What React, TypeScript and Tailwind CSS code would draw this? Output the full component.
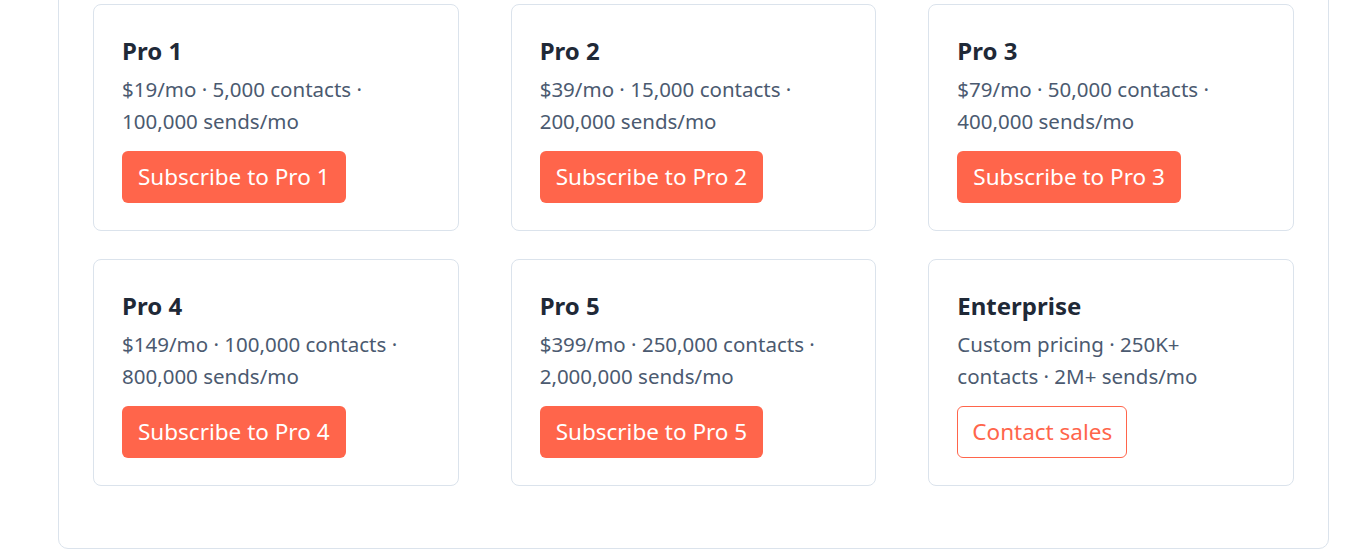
const plans = [
  { name: "Pro 1", desc: "$19/mo · 5,000 contacts · 100,000 sends/mo" },
  { name: "Pro 2", desc: "$39/mo · 15,000 contacts · 200,000 sends/mo" },
  { name: "Pro 3", desc: "$79/mo · 50,000 contacts · 400,000 sends/mo" },
  { name: "Pro 4", desc: "$149/mo · 100,000 contacts · 800,000 sends/mo" },
  { name: "Pro 5", desc: "$399/mo · 250,000 contacts · 2,000,000 sends/mo" },
];

export default function App() {
  return (
    <div className="w-full h-[559px] overflow-hidden bg-white font-['Noto_Sans',sans-serif]">
      <div className="ml-[58px] w-[1271px] -mt-[40px] pt-[43px] pb-[62px] px-[34px] border border-[#dbe3ec] rounded-[10px]">
        <div className="grid grid-cols-3 gap-x-[52px] gap-y-[28px]">
          {plans.map((p) => (
            <div key={p.name} className="border border-[#dbe3ec] rounded-lg pt-[30px] pb-[27px] pl-[28px] pr-[40px]">
              <p className="text-[24px] leading-[32px] font-bold text-[#1f2937]">{p.name}</p>
              <p className="mt-[6px] text-[20.5px] leading-[32px] text-[#4b5a70]">{p.desc}</p>
              <button className="mt-[14px] h-[52px] px-4 rounded-md bg-[#ff654b] text-white text-[22.5px]">
                Subscribe to {p.name}
              </button>
            </div>
          ))}
          <div className="border border-[#dbe3ec] rounded-lg pt-[30px] pb-[27px] pl-[28px] pr-[40px]">
            <p className="text-[24px] leading-[32px] font-bold text-[#1f2937]">Enterprise</p>
            <p className="mt-[6px] text-[20.5px] leading-[32px] text-[#4b5a70] pr-[40px]">
              Custom pricing · 250K+ contacts · 2M+ sends/mo
            </p>
            <button className="mt-[14px] h-[52px] px-[14px] rounded-md border border-[#ff654b] text-[#ff654b] text-[22.5px]">
              Contact sales
            </button>
          </div>
        </div>
      </div>
    </div>
  );
}
